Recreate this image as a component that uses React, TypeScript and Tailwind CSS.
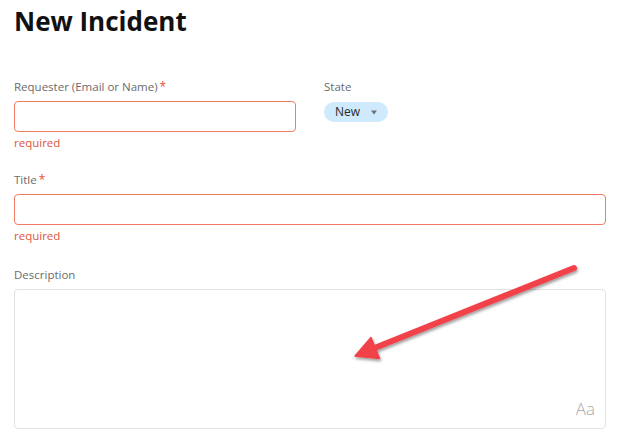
import React from 'react';

function FieldLabel({ text, required }: { text: string; required?: boolean }) {
  return (
    <div className="mb-[6px] text-[11.5px] leading-4 text-[#6b6b6b]">
      {text}
      {required && <span className="ml-[2px] text-[12px] text-[#ea4b3a]">*</span>}
    </div>
  );
}

function ErrorText() {
  return <div className="mt-[3px] text-[11.5px] leading-4 text-[#e0553a]">required</div>;
}

export default function App() {
  return (
    <div className="relative min-h-[434px] w-[619px] bg-white font-['Open_Sans',sans-serif]">
      <div className="flex flex-col pl-[14px] pr-[13px] pt-2">
        <h1 className="text-[26px] font-bold leading-[26px] text-[#111]">New Incident</h1>

        {/* Requester + state */}
        <div className="mt-[45px] flex gap-[28px]">
          <div className="flex w-[282px] flex-col">
            <FieldLabel text="Requester (Email or Name)" required />
            <div className="h-[31px] rounded-[4px] border-[1.5px] border-[#ef7d64] bg-white" />
            <ErrorText />
          </div>
          <div className="flex flex-col">
            <FieldLabel text="State" />
            <div className="mt-[1px] flex h-[20px] w-[64px] items-center justify-between rounded-full bg-[#cfeafd] pl-[11px] pr-[11px]">
              <span className="text-[12px] leading-4 text-[#2b2b2b]">New</span>
              <svg width="6" height="5" viewBox="0 0 6 5" aria-hidden="true">
                <path d="M0 0.5 L6 0.5 L3 4.5 Z" fill="#707070" />
              </svg>
            </div>
          </div>
        </div>

        {/* Title */}
        <div className="mt-[21px] flex flex-col">
          <FieldLabel text="Title" required />
          <div className="h-[31px] rounded-[4px] border-[1.5px] border-[#ef7d64] bg-white" />
          <ErrorText />
        </div>

        {/* Description */}
        <div className="mt-[23px] flex flex-col">
          <FieldLabel text="Description" />
          <div className="flex h-[140px] items-end justify-end rounded-[4px] border border-[#e2e2e2] bg-white pb-[9px] pr-[10px]">
            <span className="text-[17px] font-light leading-5 text-[#a9a9a9]">Aa</span>
          </div>
        </div>
      </div>

      {/* annotation arrow */}
      <svg
        className="pointer-events-none absolute left-0 top-0"
        width="619"
        height="434"
        viewBox="0 0 619 434"
        aria-hidden="true"
      >
        <defs>
          <filter id="shadow" x="-20%" y="-20%" width="140%" height="140%">
            <feDropShadow dx="1" dy="2" stdDeviation="1.8" floodColor="#000" floodOpacity="0.4" />
          </filter>
        </defs>
        <g filter="url(#shadow)">
          <line x1="574" y1="268" x2="372" y2="349" stroke="#f2424a" strokeWidth="6" strokeLinecap="round" />
          <path d="M355 356 L371 337.5 L379.5 358.5 Z" fill="#f2424a" stroke="#f2424a" strokeWidth="1.5" strokeLinejoin="round" />
        </g>
      </svg>
    </div>
  );
}
